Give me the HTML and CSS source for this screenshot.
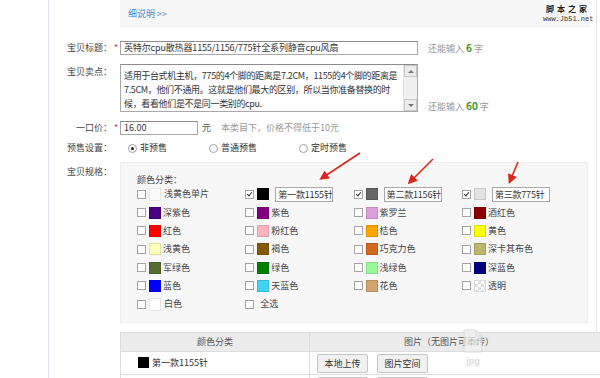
FILE: index.html
```html
<!DOCTYPE html>
<html>
<head>
  <meta charset="UTF-8">
  <link rel="stylesheet" href="styles.css">
</head>
<body>
  <div class="page">
    <div class="gutter"></div>
    <div class="main">
      <div class="tip-box"><a class="tip-link">细说明 &gt;&gt;</a></div>

      <!-- 宝贝标题 -->
      <div class="form-row row-title">
        <div class="label">宝贝标题：</div>
        <div class="star">*</div>
        <div class="text-input title-input">英特尔cpu散热器1155/1156/775针全系列静音cpu风扇</div>
        <div class="hint">还能输入 <b>6</b> 字</div>
      </div>

      <!-- 宝贝卖点 -->
      <div class="form-row row-sell">
        <div class="label">宝贝卖点：</div>
        <div class="star"></div>
        <div class="textarea">
          <div class="ta-text">适用于台式机主机，775的4个脚的距离是7.2CM，1155的4个脚的距离是<br>7.5CM，他们不通用。这就是他们最大的区别，所以当你准备替换的时<br>候，看看他们是不是同一类别的cpu.</div>
          <div class="ta-scroll">
            <div class="sb-btn"><span class="tri-up"></span></div>
            <div class="sb-track"></div>
            <div class="sb-btn"><span class="tri-down"></span></div>
          </div>
        </div>
        <div class="hint hint-bottom">还能输入 <b>60</b> 字</div>
      </div>

      <!-- 一口价 -->
      <div class="form-row row-price">
        <div class="label">一口价：</div>
        <div class="star">*</div>
        <div class="text-input price-input">16.00</div>
        <div class="unit">元</div>
        <div class="price-hint">本类目下，价格不得低于10元</div>
      </div>

      <!-- 预售设置 -->
      <div class="form-row row-presale">
        <div class="label">预售设置：</div>
        <div class="star"></div>
        <div class="radios">
          <span class="radio-item"><span class="radio checked"></span>非预售</span>
          <span class="radio-item"><span class="radio"></span>普通预售</span>
          <span class="radio-item"><span class="radio"></span>定时预售</span>
        </div>
      </div>

      <!-- 宝贝规格 -->
      <div class="form-row row-spec">
        <div class="label">宝贝规格：</div>
        <div class="star"></div>
        <div class="spec-box">
          <div class="spec-title">颜色分类：</div>
          <div class="color-grid">
            <div class="cell"><span class="cb"></span><span class="sw sw-pale"></span>浅黄色单片</div>
            <div class="cell"><span class="cb checked"></span><span class="sw" style="background:#000"></span><span class="name-input">第一款1155针</span></div>
            <div class="cell"><span class="cb checked"></span><span class="sw" style="background:#666"></span><span class="name-input">第二款1156针</span></div>
            <div class="cell"><span class="cb checked"></span><span class="sw" style="background:#e2e2e2"></span><span class="name-input">第三款775针</span></div>

            <div class="cell"><span class="cb"></span><span class="sw" style="background:#4b0082"></span>深紫色</div>
            <div class="cell"><span class="cb"></span><span class="sw" style="background:#800080"></span>紫色</div>
            <div class="cell"><span class="cb"></span><span class="sw" style="background:#dda0dd"></span>紫罗兰</div>
            <div class="cell"><span class="cb"></span><span class="sw" style="background:#8b0000"></span>酒红色</div>

            <div class="cell"><span class="cb"></span><span class="sw" style="background:#ff0000"></span>红色</div>
            <div class="cell"><span class="cb"></span><span class="sw" style="background:#ffb6c1"></span>粉红色</div>
            <div class="cell"><span class="cb"></span><span class="sw" style="background:#ffa500"></span>桔色</div>
            <div class="cell"><span class="cb"></span><span class="sw" style="background:#ffff00"></span>黄色</div>

            <div class="cell"><span class="cb"></span><span class="sw" style="background:#ffffb8"></span>浅黄色</div>
            <div class="cell"><span class="cb"></span><span class="sw" style="background:#855b00"></span>褐色</div>
            <div class="cell"><span class="cb"></span><span class="sw" style="background:#d2691e"></span>巧克力色</div>
            <div class="cell"><span class="cb"></span><span class="sw" style="background:#bdb76b"></span>深卡其布色</div>

            <div class="cell"><span class="cb"></span><span class="sw" style="background:#556b2f"></span>军绿色</div>
            <div class="cell"><span class="cb"></span><span class="sw" style="background:#008000"></span>绿色</div>
            <div class="cell"><span class="cb"></span><span class="sw" style="background:#98fb98"></span>浅绿色</div>
            <div class="cell"><span class="cb"></span><span class="sw" style="background:#000080"></span>深蓝色</div>

            <div class="cell"><span class="cb"></span><span class="sw" style="background:#0000ff"></span>蓝色</div>
            <div class="cell"><span class="cb"></span><span class="sw" style="background:#3fd4f2"></span>天蓝色</div>
            <div class="cell"><span class="cb"></span><span class="sw" style="background:#d2a46e"></span>花色</div>
            <div class="cell"><span class="cb"></span><span class="sw sw-clear"></span>透明</div>

            <div class="cell"><span class="cb"></span><span class="sw sw-white"></span>白色</div>
            <div class="cell"><span class="cb"></span><span class="all">全选</span></div>
          </div>
        </div>
      </div>

      <!-- 颜色图片表 -->
      <div class="table-wrap">
        <table class="spec-table">
          <tr>
            <th class="c1">颜色分类</th>
            <th class="c2">图片（无图片可不传）</th>
            <th class="c3"></th>
          </tr>
          <tr>
            <td class="c1"><span class="sw" style="background:#000"></span>第一款1155针</td>
            <td class="c2"><span class="btn">本地上传</span><span class="btn">图片空间</span></td>
            <td class="c3"></td>
          </tr>
          <tr>
            <td class="c1"></td>
            <td class="c2"><span class="btn"></span><span class="btn"></span></td>
            <td class="c3"></td>
          </tr>
        </table>
      </div>
    </div>

    <!-- 水印 -->
    <div class="watermark">
      <div class="wm-cn">脚本之家</div>
      <div class="wm-en">www.Jb51.net</div>
    </div>

    <div class="jpg-mark">
      <svg width="22" height="24" viewBox="0 0 22 24"><path d="M2 1h12l6 6v16H2z" fill="#f2f2f2" stroke="#cfcfcf"/><path d="M14 1v6h6" fill="none" stroke="#cfcfcf"/><rect x="5" y="10" width="12" height="2" fill="#d6d6d6"/><rect x="5" y="14" width="12" height="2" fill="#d6d6d6"/></svg>
      <span class="jpg-text">jpg</span>
    </div>

    <svg class="arrows" width="600" height="378" viewBox="0 0 600 378">
      <defs>
        <marker id="head" markerWidth="6" markerHeight="6" refX="4" refY="3" orient="auto" markerUnits="strokeWidth">
          <path d="M0 0L6 3L0 6z" fill="#d9261c"/>
        </marker>
      </defs>
      <line x1="360" y1="153" x2="322" y2="178" stroke="#d9261c" stroke-width="1.6" marker-end="url(#head)"/>
      <line x1="433" y1="159" x2="410" y2="182" stroke="#d9261c" stroke-width="1.6" marker-end="url(#head)"/>
      <line x1="518" y1="162" x2="510" y2="181" stroke="#d9261c" stroke-width="1.6" marker-end="url(#head)"/>
    </svg>
  </div>
</body>
</html>
```

FILE: styles.css
```css
body {
  margin: 0;
  width: 600px;
  height: 378px;
  overflow: hidden;
  background: #fff;
  color: #444;
  font-family: "Noto Sans CJK SC", "Liberation Sans", sans-serif;
  font-size: 9px;
  line-height: 12px;
}

.page {
  position: relative;
  display: flex;
  width: 600px;
  height: 378px;
  overflow: hidden;
}

.gutter {
  width: 48px;
  border-right: 1px solid #dfe5ec;
}

.main {
  width: 547px;
  border-right: 1px solid #e6e6e6;
}

/* 顶部说明框 */
.tip-box {
  margin-left: 71px;
  width: 470px;
  height: 27px;
  box-sizing: border-box;
  padding-left: 8px;
  background: #f7f7f7;
  border-bottom: 1px solid #eee;
  line-height: 27px;
}

.tip-link {
  color: #4a8ccb;
}

.form-row {
  display: flex;
  align-items: center;
}

.label {
  width: 63px;
  text-align: right;
  color: #444;
  white-space: nowrap;
}

.star {
  width: 8px;
  text-align: center;
  color: #d33;
}

.text-input {
  box-sizing: border-box;
  height: 14px;
  padding: 0 3px;
  border: 1px solid #a8a8a8;
  border-top-color: #8c8c8c;
  background: #fff;
  line-height: 12px;
  color: #333;
  white-space: nowrap;
  overflow: hidden;
}

.hint {
  margin-left: 10px;
  color: #999;
}

.hint b {
  color: #3c9422;
  font-size: 10px;
}

.row-title {
  margin-top: 14px;
}

.title-input {
  width: 298px;
  letter-spacing: -0.15px;
}

/* 卖点 */
.row-sell {
  margin-top: 9px;
  align-items: flex-start;
}

.row-sell .label {
  padding-top: 2px;
}

.hint-bottom {
  align-self: flex-end;
  margin-bottom: -1px;
}

.textarea {
  display: flex;
  width: 298px;
  height: 48px;
  box-sizing: border-box;
  border: 1px solid #a8a8a8;
  border-top-color: #8c8c8c;
  background: #fff;
}

.ta-text {
  flex: 1;
  min-width: 0;
  padding: 4px 0 0 3px;
  line-height: 14px;
  letter-spacing: -0.35px;
  color: #333;
  white-space: nowrap;
  overflow: hidden;
}

.ta-scroll {
  width: 13px;
  display: flex;
  flex-direction: column;
  background: #f0f0f0;
  border-left: 1px solid #e2e2e2;
}

.sb-btn {
  height: 12px;
  box-sizing: border-box;
  border: 1px solid #c8c8c8;
  background: #ececec;
  display: flex;
  align-items: center;
  justify-content: center;
}

.sb-track {
  flex: 1;
}

.tri-up {
  border-left: 3px solid transparent;
  border-right: 3px solid transparent;
  border-bottom: 3px solid #777;
}

.tri-down {
  border-left: 3px solid transparent;
  border-right: 3px solid transparent;
  border-top: 3px solid #777;
}

/* 一口价 */
.row-price {
  margin-top: 9px;
}

.price-input {
  width: 78px;
}

.unit {
  margin-left: 4px;
  color: #555;
}

.price-hint {
  margin-left: 10px;
  color: #999;
}

/* 预售 */
.row-presale {
  margin-top: 6px;
  height: 14px;
}

.radios {
  display: flex;
  padding-left: 8px;
  gap: 42px;
  color: #333;
}

.radio-item {
  display: flex;
  align-items: center;
}

.radio {
  width: 9px;
  height: 9px;
  box-sizing: border-box;
  margin-right: 3px;
  border: 1px solid #a0a0a0;
  border-radius: 50%;
  background: #fff;
  position: relative;
}

.radio.checked::after {
  content: '';
  position: absolute;
  left: 2px;
  top: 2px;
  width: 3px;
  height: 3px;
  border-radius: 50%;
  background: #222;
}

/* 规格 */
.row-spec {
  margin-top: 7px;
  align-items: flex-start;
}

.row-spec .label {
  padding-top: 4px;
}

.spec-box {
  width: 468px;
  height: 161px;
  box-sizing: border-box;
  padding: 11px 0 0 16px;
  background: #f7f7f7;
  border: 1px solid #eee;
}

.spec-title {
  color: #444;
  margin-bottom: -1px;
}

.color-grid {
  display: grid;
  grid-template-columns: repeat(4, 108.3px);
  grid-auto-rows: 18.35px;
  align-items: center;
  color: #444;
}

.cell {
  display: flex;
  align-items: center;
  white-space: nowrap;
}

.cb {
  width: 9px;
  height: 9px;
  box-sizing: border-box;
  margin-right: 3px;
  border: 1px solid #a4a4a4;
  background: #fff;
  position: relative;
}

.cb.checked::after {
  content: '';
  position: absolute;
  left: 2px;
  top: 0px;
  width: 2px;
  height: 4px;
  border-right: 1px solid #333;
  border-bottom: 1px solid #333;
  transform: rotate(40deg);
}

.sw {
  display: inline-block;
  width: 12px;
  height: 12px;
  box-sizing: border-box;
  margin-right: 2px;
  border: 1px solid rgba(0, 0, 0, 0.12);
}

.sw-pale {
  background: #fafafa;
  border-color: #e6e6e6;
  height: 13px;
  margin-right: 3px;
}

.sw-white {
  background: #fff;
  border-color: #e6e6e6;
  height: 13px;
  margin-right: 3px;
}

.sw-clear {
  border-color: #ddd;
  background-color: #fff;
  background-image: linear-gradient(45deg, #ddd 25%, transparent 25%, transparent 75%, #ddd 75%), linear-gradient(45deg, #ddd 25%, transparent 25%, transparent 75%, #ddd 75%);
  background-size: 6px 6px;
  background-position: 0 0, 3px 3px;
}

.name-input {
  margin-left: 4px;
  width: 58px;
  height: 15px;
  box-sizing: border-box;
  padding: 0 2px;
  border: 1px solid #a8a8a8;
  background: #fff;
  line-height: 13px;
  letter-spacing: -0.2px;
  color: #333;
  overflow: hidden;
}

.all {
  margin-left: 3px;
}

/* 表格 */
.table-wrap {
  margin: 9px 0 0 71px;
}

.spec-table {
  width: 468px;
  border-collapse: collapse;
  table-layout: fixed;
  font-size: 9px;
}

.spec-table th,
.spec-table td {
  border: 1px solid #dcdcdc;
  padding: 0;
  white-space: nowrap;
}

.spec-table th {
  height: 18px;
  background: #ebebeb;
  font-weight: normal;
  color: #555;
}

.spec-table td {
  height: 22px;
  background: #fff;
  color: #333;
}

.spec-table .c1 {
  width: 188px;
}

.spec-table .c2 {
  width: 227px;
}

.spec-table th.c2 {
  text-align: left;
  padding-left: 94px;
}

.spec-table td.c1 {
  padding-left: 17px;
}

.spec-table td.c1 .sw {
  width: 11px;
  height: 11px;
  margin-right: 3px;
  vertical-align: -2px;
}

.spec-table td.c2 {
  padding-left: 7px;
}

.btn {
  display: inline-block;
  width: 51px;
  height: 19px;
  box-sizing: border-box;
  margin-right: 9px;
  border: 1px solid #c6c6c6;
  border-radius: 2px;
  background: #f1f1f1;
  text-align: center;
  line-height: 17px;
  color: #333;
  vertical-align: middle;
}

/* 覆盖层 */
.watermark {
  position: absolute;
  top: 3px;
  left: 543px;
  width: 50px;
  text-align: center;
}

.wm-cn {
  font-family: "Noto Sans CJK SC", serif;
  font-size: 8px;
  line-height: 11px;
  letter-spacing: 3px;
  color: #222;
  font-weight: bold;
}

.wm-en {
  font-family: "Liberation Mono", monospace;
  font-size: 7px;
  line-height: 10px;
  color: #333;
}

.jpg-mark {
  position: absolute;
  left: 461px;
  top: 329px;
  width: 24px;
  text-align: center;
  opacity: 0.7;
}

.jpg-text {
  display: block;
  font-family: "Liberation Sans", sans-serif;
  font-size: 9px;
  line-height: 10px;
  font-weight: bold;
  color: #ccc;
}

.arrows {
  position: absolute;
  top: 0;
  left: 0;
  pointer-events: none;
}
```
